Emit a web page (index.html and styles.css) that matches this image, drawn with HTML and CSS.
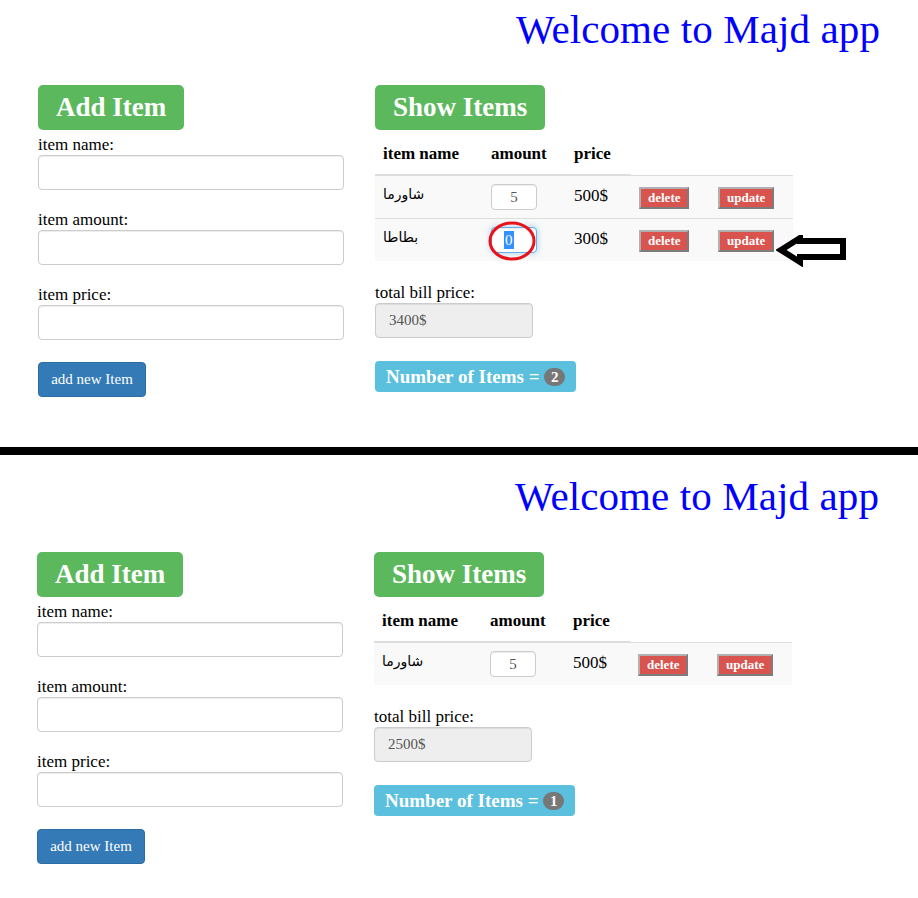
FILE: index.html
```html
<!DOCTYPE html>
<html>
<head>
<meta charset="utf-8">
<title>Majd app</title>
<link rel="stylesheet" href="styles.css">
</head>
<body>
<section class="panel">
  <h1 class="welcome">Welcome to Majd app</h1>
  <div class="cols">
    <div class="col-left">
      <div class="tag">Add Item</div>
      <form class="form">
        <div class="group"><label class="lbl">item name:</label><input class="field" type="text"></div>
        <div class="group"><label class="lbl">item amount:</label><input class="field" type="text"></div>
        <div class="group"><label class="lbl">item price:</label><input class="field" type="text"></div>
        <button class="btn-blue" type="button">add new Item</button>
      </form>
    </div>
    <div class="col-right">
      <div class="tag">Show Items</div>
      <table class="items">
        <colgroup><col class="c1"><col class="c2"><col class="c3"><col class="c4"><col class="c5"></colgroup>
        <thead><tr><th>item name</th><th>amount</th><th>price</th></tr></thead>
        <tbody>
          <tr>
            <td class="name">شاورما</td>
            <td><div class="amt">5</div></td>
            <td>500$</td>
            <td><button class="btn-red" type="button">delete</button></td>
            <td><button class="btn-red" type="button">update</button></td>
          </tr>
          <tr>
            <td class="name">بطاطا</td>
            <td class="mark-cell"><div class="amt amt-focus"><span class="sel">0</span></div>
              <svg class="ring" width="50" height="44" viewBox="0 0 50 44"><ellipse cx="25" cy="21" rx="22" ry="18" fill="none" stroke="#e8141c" stroke-width="3"/></svg>
            </td>
            <td>300$</td>
            <td><button class="btn-red" type="button">delete</button></td>
            <td class="mark-cell"><button class="btn-red" type="button">update</button>
              <svg class="arrow" width="72" height="32" viewBox="0 0 72 32"><polygon points="5,15 24,3 24,6 67,6 67,22 24,22 24,27" fill="#fff" stroke="#000" stroke-width="6" stroke-linejoin="miter"/></svg>
            </td>
          </tr>
        </tbody>
      </table>
      <div class="group"><label class="lbl">total bill price:</label><div class="total">3400$</div></div>
      <div class="count">Number of Items =&nbsp;<span class="badge">2</span></div>
    </div>
  </div>
</section>
<div class="divider"></div>
<section class="panel panel-bottom">
  <h1 class="welcome">Welcome to Majd app</h1>
  <div class="cols">
    <div class="col-left">
      <div class="tag">Add Item</div>
      <form class="form">
        <div class="group"><label class="lbl">item name:</label><input class="field" type="text"></div>
        <div class="group"><label class="lbl">item amount:</label><input class="field" type="text"></div>
        <div class="group"><label class="lbl">item price:</label><input class="field" type="text"></div>
        <button class="btn-blue" type="button">add new Item</button>
      </form>
    </div>
    <div class="col-right">
      <div class="tag">Show Items</div>
      <table class="items">
        <colgroup><col class="c1"><col class="c2"><col class="c3"><col class="c4"><col class="c5"></colgroup>
        <thead><tr><th>item name</th><th>amount</th><th>price</th></tr></thead>
        <tbody>
          <tr>
            <td class="name">شاورما</td>
            <td><div class="amt">5</div></td>
            <td>500$</td>
            <td><button class="btn-red" type="button">delete</button></td>
            <td><button class="btn-red" type="button">update</button></td>
          </tr>
        </tbody>
      </table>
      <div class="group"><label class="lbl">total bill price:</label><div class="total">2500$</div></div>
      <div class="count">Number of Items =&nbsp;<span class="badge">1</span></div>
    </div>
  </div>
</section>
</body>
</html>
```
FILE: styles.css
```css
* { box-sizing: border-box; }
html, body { margin: 0; padding: 0; background: #fff; }
body {
  width: 918px;
  font-family: "Liberation Serif", "Times New Roman", serif;
  font-size: 17px;
  color: #000;
}
.panel {
  height: 447px;
  padding: 5px 38px 0 38px;
  overflow: hidden;
}
.panel-bottom {
  height: 443px;
  padding: 17px 39px 0 37px;
}
.divider { height: 8px; background: #000; }
.welcome {
  margin: 0;
  font-weight: normal;
  font-size: 41px;
  line-height: 48px;
  color: #0000ff;
  text-align: right;
  letter-spacing: 0.1px;
}
.cols { display: flex; gap: 31px; margin-top: 32px; align-items: flex-start; }
.col-left { width: 306px; display: flex; flex-direction: column; align-items: flex-start; }
.col-right { width: 418px; display: flex; flex-direction: column; align-items: flex-start; }
.tag {
  display: inline-block;
  height: 45px;
  line-height: 45px;
  padding: 0 18px;
  border-radius: 5px;
  background: #5cb85c;
  color: #fff;
  font-weight: bold;
  font-size: 27px;
}
.form { margin-top: 5px; display: flex; flex-direction: column; align-items: flex-start; }
.group { display: flex; flex-direction: column; margin-bottom: 20px; }
.form .group:nth-of-type(3) { margin-bottom: 22px; }
.lbl { display: block; height: 20px; line-height: 20px; }
.field {
  width: 306px;
  height: 35px;
  margin: 0;
  border: 1px solid #ccc;
  border-radius: 4px;
  background: #fff;
  box-shadow: inset 0 1px 1px rgba(0,0,0,.075);
}
.btn-blue {
  width: 108px;
  height: 35px;
  padding: 0;
  border: 1px solid #2e6da4;
  border-radius: 4px;
  background: #337ab7;
  color: #fff;
  font-family: "Liberation Serif", serif;
  font-size: 15px;
}
.items {
  width: 418px;
  margin: 4px 0 22px 0;
  border-collapse: collapse;
  table-layout: fixed;
}
.c1 { width: 108px; }
.c2 { width: 83px; }
.c3 { width: 65px; }
.c4 { width: 79px; }
.c5 { width: 83px; }
.items th {
  text-align: left;
  font-weight: bold;
  padding: 8px;
  line-height: 24px;
  border-bottom: 2px solid #ddd;
  vertical-align: bottom;
}
.items td {
  padding: 8px;
  line-height: 24px;
  border-top: 1px solid #ddd;
  vertical-align: top;
}
.items tbody tr { background: #f9f9f9; }
.items td.name { font-family: "Liberation Serif", "DejaVu Sans", serif; font-size: 14px; line-height: 22px; }
.mark-cell { position: relative; }
.amt {
  width: 46px;
  height: 26px;
  line-height: 24px;
  border: 1px solid #ccc;
  border-radius: 4px;
  background: #fff;
  color: #555;
  font-size: 15px;
  text-align: center;
  box-shadow: inset 0 1px 1px rgba(0,0,0,.075);
}
.amt-focus {
  border-color: #66afe9;
  box-shadow: inset 0 1px 1px rgba(0,0,0,.075), 0 0 6px rgba(102,175,233,.6);
  text-align: left;
  padding-left: 12px;
}
.sel { background: #3390ff; color: #fff; display: inline-block; line-height: 18px; padding: 0 1px; }
.ring { position: absolute; left: 4px; top: 1px; }
.arrow { position: absolute; left: 66px; top: 16px; }
.btn-red {
  display: inline-block;
  vertical-align: top;
  margin-top: 3px;
  height: 22px;
  padding: 0 7px;
  border: 2px solid;
  border-color: #b0b0b0 #7c7c7c #7c7c7c #b0b0b0;
  background: #d9534f;
  color: #fff;
  font-family: "Liberation Serif", serif;
  font-weight: bold;
  font-size: 13px;
  line-height: 18px;
}
.total {
  width: 158px;
  height: 35px;
  line-height: 33px;
  padding-left: 13px;
  border: 1px solid #ccc;
  border-radius: 4px;
  background: #eee;
  color: #555;
  font-size: 15px;
  box-shadow: inset 0 1px 1px rgba(0,0,0,.075);
}
.group + .count { margin-top: 3px; }
.count {
  display: inline-flex;
  align-items: center;
  height: 31px;
  padding: 0 11px;
  border-radius: 4px;
  background: #5bc0de;
  color: #fff;
  font-weight: bold;
  font-size: 19px;
  white-space: nowrap;
}
.badge {
  display: inline-block;
  min-width: 21px;
  height: 18px;
  line-height: 18px;
  padding: 0 6px;
  border-radius: 9px;
  background: #777;
  font-size: 15px;
  text-align: center;
}
```
